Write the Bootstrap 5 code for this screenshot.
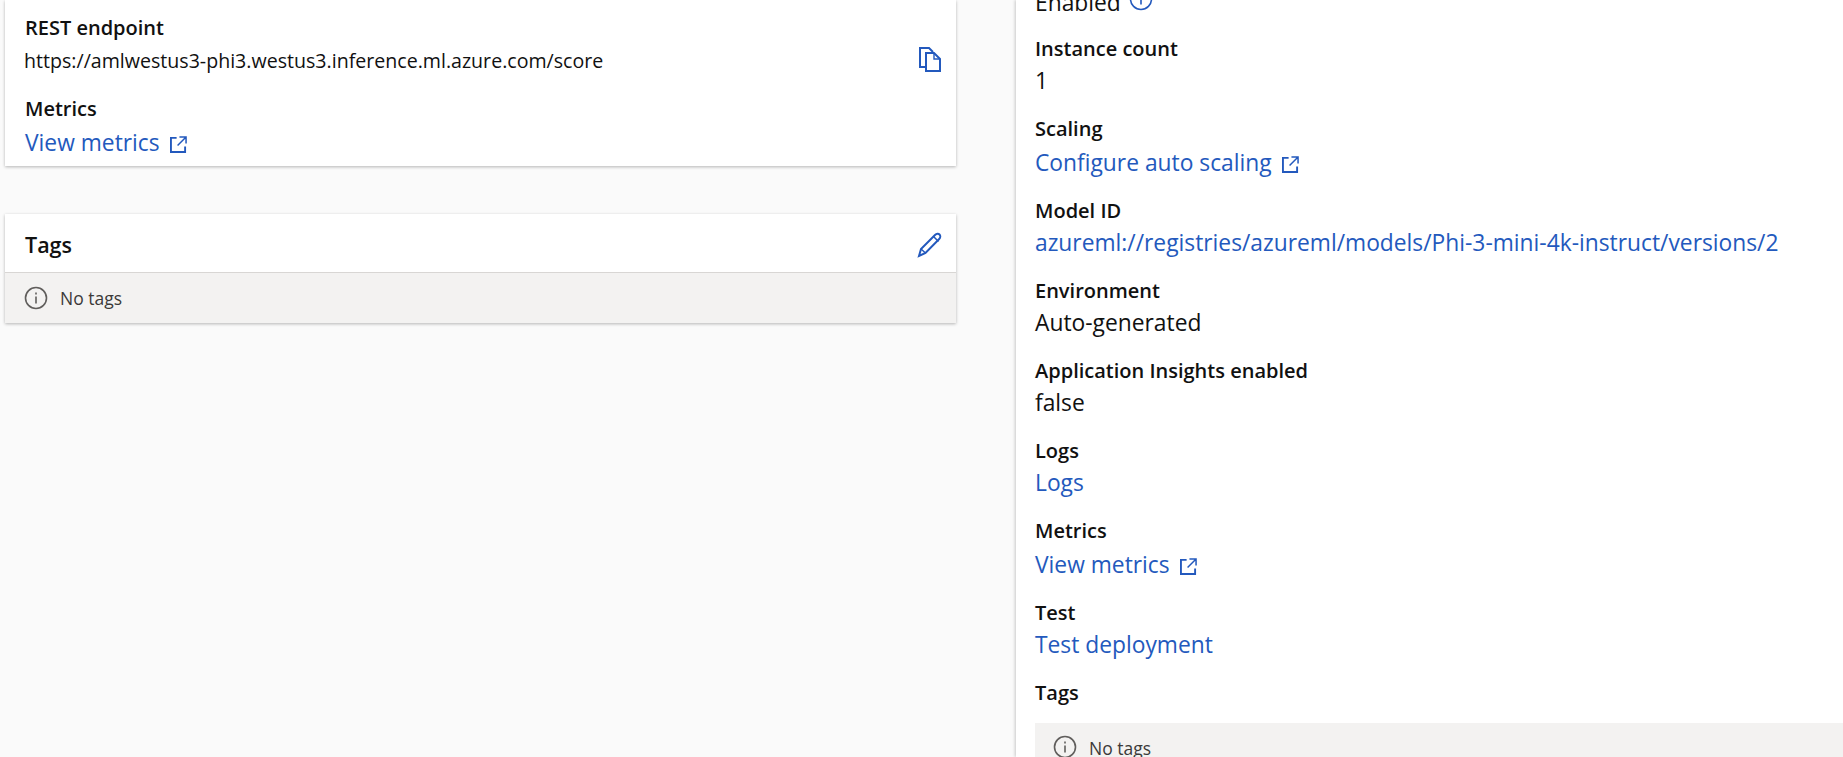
<!DOCTYPE html>
<html>
<head>
  <meta charset="utf-8">
  <title>Deployment details</title>
  <link href="https://cdn.jsdelivr.net/npm/bootstrap@5.3.0/dist/css/bootstrap.min.css" rel="stylesheet">
  <style>
    html, body { height: 757px; overflow: hidden; }
    body { background: #fafafa; color: #111; font-family: "Open Sans", "Liberation Sans", sans-serif; }
    a { color: #2359bd; text-decoration: none; }
    .page-wrap { height: 757px; }
    .left-col { width: 1016px; padding-left: 5px; flex-shrink: 0; }
    .detail-card { width: 951px; background: #fff; box-shadow: 0 1px 3px rgba(0,0,0,.28); border: 0; }
    .endpoint-card { height: 166px; padding: 14px 14px 0 20px; }
    .fld-label { font-size: 20px; font-weight: 600; line-height: 28px; }
    .fld-value { font-size: 22.8px; line-height: 32px; margin-top: 2px; }
    .fld-value.with-icon { padding-top: 2px; }
    .ext-ico { margin-left: 4px; }
    .url-text { font-size: 19.6px; line-height: 28px; margin-top: 5px; margin-left: -1px; }
    .tags-card { margin-top: 48px; height: 109px; }
    .tags-head { height: 59px; padding: 4px 13px 0 20px; border-bottom: 1px solid #d8d6d4; }
    .tags-title { font-size: 21.5px; font-weight: 600; }
    .no-tags { background: #f3f2f1; color: #3b3a39; font-size: 17.5px; }
    .tags-body { height: 50px; padding-left: 19px; }
    .right-col { background: #fff; box-shadow: -1px 0 3px rgba(0,0,0,.2); padding-left: 19px; overflow: hidden; }
    .fld-row { height: 80px; }
    .fld-row.tall { height: 82px; }
    .enabled-row { margin-top: -13px; height: 48px; }
    .tags-box { height: 60px; margin-top: 16px; padding-left: 18px; padding-top: 12px; }
    .ico-btn { color: #2359bd; }
  </style>
</head>
<body>
  <div class="page-wrap d-flex">
    <div class="left-col">
      <div class="detail-card endpoint-card">
        <div class="fld-label">REST endpoint</div>
        <div class="d-flex justify-content-between align-items-center">
          <div class="url-text">https://amlwestus3-phi3.westus3.inference.ml.azure.com/score</div>
          <svg class="ico-btn" width="24" height="26" viewBox="0 0 24 26" fill="none" stroke="currentColor" stroke-width="2">
            <path d="M8 21H2V2h9l4 4"/>
            <path d="M8 7h8l6 6v12H8z"/>
            <path d="M16 7v6h6" stroke-width="1.4"/>
          </svg>
        </div>
        <div class="fld-label mt-3 pt-1">Metrics</div>
        <div class="fld-value with-icon"><a href="#">View metrics <svg class="ext-ico" width="17" height="17" viewBox="0 0 18 18" fill="none" stroke="currentColor" stroke-width="2"><path d="M7 2H1v15h15v-6"/><path d="M10 1h7v7M17 1 8 10" stroke-width="1.6"/></svg></a></div>
      </div>
      <div class="detail-card tags-card">
        <div class="tags-head d-flex justify-content-between align-items-center">
          <span class="tags-title">Tags</span>
          <svg class="ico-btn" width="26" height="26" viewBox="0 0 26 26" fill="none" stroke="currentColor" stroke-width="2">
            <path d="M2 24l2-7L18 3c1.500-1.500 3.500-1.500 4.500-.5s1.200 3-.3 4.500L8.500 21z"/>
            <path d="M4 17l4.500 4M16.500 4.500l5 5" stroke-width="1.500"/>
          </svg>
        </div>
        <div class="no-tags tags-body d-flex align-items-center gap-2">
          <svg class="me-1" width="24" height="24" viewBox="0 0 24 24" fill="none" stroke="#605e5c" stroke-width="1.6"><circle cx="12" cy="12" r="10.500"/><path d="M12 10.500v7M12 6.500v2"/></svg>
          <span>No tags</span>
        </div>
      </div>
    </div>
    <div class="right-col flex-grow-1">
      <div class="enabled-row">
        <span class="fld-value">Enabled</span>
        <svg class="ms-1 align-baseline" width="24" height="24" viewBox="0 0 24 24" fill="none" stroke="#2359bd" stroke-width="1.6"><circle cx="12" cy="12" r="10.500"/><path d="M12 10.500v7M12 6.500v2"/></svg>
      </div>
      <div class="fld-row"><div class="fld-label">Instance count</div><div class="fld-value">1</div></div>
      <div class="fld-row tall"><div class="fld-label">Scaling</div><div class="fld-value with-icon"><a href="#">Configure auto scaling <svg class="ext-ico" width="17" height="17" viewBox="0 0 18 18" fill="none" stroke="currentColor" stroke-width="2"><path d="M7 2H1v15h15v-6"/><path d="M10 1h7v7M17 1 8 10" stroke-width="1.6"/></svg></a></div></div>
      <div class="fld-row"><div class="fld-label">Model ID</div><div class="fld-value"><a href="#">azureml://registries/azureml/models/Phi-3-mini-4k-instruct/versions/2</a></div></div>
      <div class="fld-row"><div class="fld-label">Environment</div><div class="fld-value">Auto-generated</div></div>
      <div class="fld-row"><div class="fld-label">Application Insights enabled</div><div class="fld-value">false</div></div>
      <div class="fld-row"><div class="fld-label">Logs</div><div class="fld-value"><a href="#">Logs</a></div></div>
      <div class="fld-row tall"><div class="fld-label">Metrics</div><div class="fld-value with-icon"><a href="#">View metrics <svg class="ext-ico" width="17" height="17" viewBox="0 0 18 18" fill="none" stroke="currentColor" stroke-width="2"><path d="M7 2H1v15h15v-6"/><path d="M10 1h7v7M17 1 8 10" stroke-width="1.6"/></svg></a></div></div>
      <div class="fld-row"><div class="fld-label">Test</div><div class="fld-value"><a href="#">Test deployment</a></div></div>
      <div class="fld-label">Tags</div>
      <div class="no-tags tags-box d-flex gap-2">
        <svg class="me-1" width="24" height="24" viewBox="0 0 24 24" fill="none" stroke="#605e5c" stroke-width="1.6"><circle cx="12" cy="12" r="10.500"/><path d="M12 10.500v7M12 6.500v2"/></svg>
        <span>No tags</span>
      </div>
    </div>
  </div>
  <script src="https://cdn.jsdelivr.net/npm/bootstrap@5.3.0/dist/js/bootstrap.bundle.min.js"></script>
</body>
</html>
